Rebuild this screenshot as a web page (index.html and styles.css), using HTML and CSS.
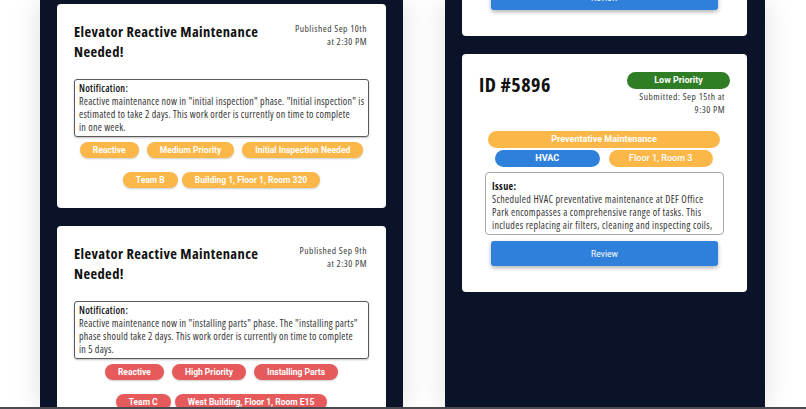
FILE: index.html
```html
<!DOCTYPE html>
<html lang="en">
<head>
<meta charset="utf-8">
<title>Work Orders</title>
<link rel="stylesheet" href="styles.css">
</head>
<body>
<div class="page">
  <section class="panel panel-left">
    <article class="card notice">
      <header class="notice-head">
        <h2 class="notice-title">Elevator Reactive Maintenance Needed!</h2>
        <p class="notice-date">Published Sep 10th<br>at 2:30 PM</p>
      </header>
      <div class="notice-box"><strong>Notification:</strong><br>Reactive maintenance now in "initial inspection" phase. "Initial inspection" is estimated to take 2 days. This work order is currently on time to complete in&nbsp;one&nbsp;week.</div>
      <div class="tags tags-first">
        <span class="tag tag-orange">Reactive</span>
        <span class="tag tag-orange">Medium Priority</span>
        <span class="tag tag-orange">Initial Inspection Needed</span>
      </div>
      <div class="tags tags-second">
        <span class="tag tag-orange">Team B</span>
        <span class="tag tag-orange">Building 1, Floor 1, Room 320</span>
      </div>
    </article>
    <article class="card notice">
      <header class="notice-head">
        <h2 class="notice-title">Elevator Reactive Maintenance Needed!</h2>
        <p class="notice-date">Published Sep 9th<br>at 2:30 PM</p>
      </header>
      <div class="notice-box"><strong>Notification:</strong><br>Reactive maintenance now in "installing parts" phase. The "installing parts" phase should take 2 days. This work order is currently on time to complete in&nbsp;5&nbsp;days.</div>
      <div class="tags tags-first">
        <span class="tag tag-red">Reactive</span>
        <span class="tag tag-red">High Priority</span>
        <span class="tag tag-red">Installing Parts</span>
      </div>
      <div class="tags tags-second">
        <span class="tag tag-red">Team C</span>
        <span class="tag tag-red">West Building, Floor 1, Room E15</span>
      </div>
    </article>
  </section>

  <section class="panel panel-right">
    <article class="card request request-partial">
      <button class="review-btn" type="button">Review</button>
    </article>
    <article class="card request">
      <header class="request-head">
        <h2 class="request-id">ID #5896</h2>
        <div class="request-meta">
          <span class="badge badge-green">Low Priority</span>
          <p class="request-date">Submitted: Sep 15th at<br>9:30 PM</p>
        </div>
      </header>
      <div class="request-tags">
        <span class="pill pill-orange">Preventative Maintenance</span>
        <div class="pill-pair">
          <span class="pill pill-blue">HVAC</span>
          <span class="pill pill-orange pill-light">Floor 1, Room 3</span>
        </div>
      </div>
      <div class="issue-box"><strong>Issue:</strong><br>Scheduled HVAC preventative maintenance at DEF Office Park encompasses a comprehensive range of tasks. This includes replacing air filters, cleaning and inspecting coils, and lubricating moving parts to ensure optimal performance.</div>
      <button class="review-btn" type="button">Review</button>
    </article>
  </section>
</div>
</body>
</html>
```

FILE: styles.css
```css
* { box-sizing: border-box; }

html, body {
  margin: 0;
  height: 409px;
  overflow: hidden;
  background: #ffffff;
  font-family: "Open Sans", "Roboto", sans-serif;
  font-stretch: 75%;
  color: #1a1a1a;
}

body::after {
  content: "";
  position: fixed;
  left: 0;
  right: 0;
  bottom: 0;
  height: 2px;
  background: #4a4a52;
}

.page {
  display: flex;
  gap: 42px;
  padding-left: 40px;
  height: 409px;
}

.panel {
  background: #0b1329;
  height: 409px;
  display: flex;
  flex-direction: column;
  gap: 18px;
  box-shadow: 0 0 28px rgba(0, 0, 0, 0.13);
}

.panel-left {
  width: 363px;
  padding: 4px 17px 0 17px;
}

.panel-right {
  width: 320px;
  padding: 0 18px 0 17px;
}

.card {
  background: #ffffff;
  border-radius: 4px;
  flex: none;
}

/* ---------- notices (left) ---------- */
.notice {
  padding: 18px 17px 20px 17px;
}

.notice-head {
  display: flex;
  justify-content: space-between;
  align-items: flex-start;
}

.notice-title {
  margin: 0;
  width: 200px;
  font-size: 14.5px;
  letter-spacing: 0.4px;
  line-height: 20px;
  font-weight: 700;
  color: #111;
}

.notice-date {
  margin: 0;
  padding-top: 1px;
  padding-right: 2px;
  font-size: 9.5px;
  letter-spacing: 0.5px;
  line-height: 12.7px;
  text-align: right;
  color: #3a3a3a;
}

.notice-box {
  margin-top: 17px;
  border: 1px solid #5a5a5a;
  border-radius: 3px;
  padding: 2px 3px 2px 4px;
  font-size: 10px;
  letter-spacing: 0.26px;
  line-height: 13px;
  color: #333;
  box-shadow: 0 1px 2px rgba(0, 0, 0, 0.25);
}

.notice-box strong {
  color: #111;
  font-weight: 600;
}

.tags {
  display: flex;
  justify-content: center;
}

.tags-first {
  gap: 8px;
  margin-top: 5px;
}

.tags-second {
  gap: 4px;
  margin-top: 14px;
}

.tag {
  height: 16px;
  line-height: 16px;
  padding: 0 13px;
  border-radius: 8px;
  font-family: "Roboto", sans-serif;
  font-stretch: normal;
  font-size: 8.5px;
  font-weight: 700;
  color: #ffffff;
  box-shadow: 0 1px 2px rgba(0, 0, 0, 0.2);
  white-space: nowrap;
}

.tag-orange { background: #fbb748; }
.tag-red { background: #e65a5c; }

/* ---------- requests (right) ---------- */
.request {
  padding: 17px 17px 26px 17px;
}

.request-partial {
  margin-top: -15px;
  padding-top: 0;
}

.request-head {
  display: flex;
  justify-content: space-between;
  align-items: flex-start;
}

.request-id {
  margin: 0;
  padding-top: 2px;
  font-size: 20px;
  letter-spacing: 0.5px;
  line-height: 24px;
  font-weight: 700;
  color: #111;
}

.request-meta {
  width: 103px;
  padding-top: 1px;
  display: flex;
  flex-direction: column;
  align-items: stretch;
}

.badge {
  height: 17px;
  line-height: 17px;
  border-radius: 9px;
  text-align: center;
  font-family: "Roboto", sans-serif;
  font-stretch: normal;
  font-size: 9px;
  font-weight: 700;
  color: #ffffff;
}

.badge-green { background: #2f7d25; }

.request-date {
  margin: 2px 5px 0 0;
  font-size: 9.5px;
  letter-spacing: 0.5px;
  line-height: 12.7px;
  text-align: right;
  color: #3a3a3a;
  white-space: nowrap;
}

.request-tags {
  margin-top: 15px;
  padding: 0 10px 0 9px;
  display: flex;
  flex-direction: column;
  gap: 2px;
}

.pill {
  height: 17px;
  line-height: 17px;
  border-radius: 9px;
  text-align: center;
  font-family: "Roboto", sans-serif;
  font-stretch: normal;
  font-size: 9px;
  font-weight: 700;
  color: #ffffff;
}

.pill-orange { background: #fbb748; }
.pill-blue { background: #2f80da; }
.pill-light { font-weight: 500; }

.pill-pair {
  display: grid;
  grid-template-columns: 1fr 1fr;
  gap: 9px;
  padding: 0 7px;
}

.issue-box {
  margin: 5px 6px 0 6px;
  height: 63px;
  overflow: hidden;
  border: 1px solid #a8a8a8;
  border-radius: 4px;
  padding: 7px 6px 0 6px;
  font-size: 10px;
  letter-spacing: 0.35px;
  line-height: 12.8px;
  color: #333;
}

.issue-box strong {
  color: #111;
  font-weight: 700;
}

.review-btn {
  display: block;
  margin: 6px 12px 0 12px;
  width: calc(100% - 24px);
  height: 25px;
  border: none;
  border-radius: 3px;
  background: #2f80da;
  color: #ffffff;
  font-family: "Roboto", sans-serif;
  font-stretch: normal;
  font-size: 8.5px;
  box-shadow: 0 2px 4px rgba(0, 0, 0, 0.3);
  padding: 0;
}

.request-partial .review-btn {
  margin-top: 0;
}
```
